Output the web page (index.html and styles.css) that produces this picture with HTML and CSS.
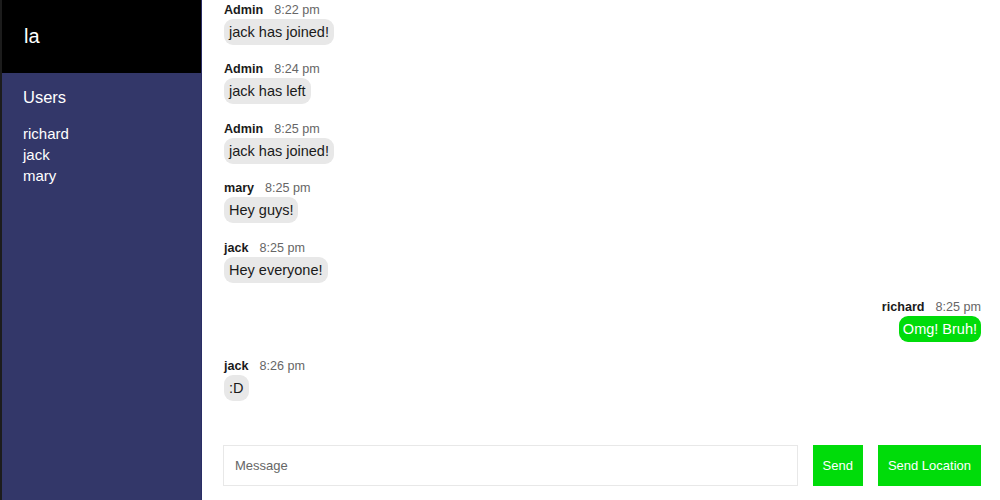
FILE: index.html
```html
<!DOCTYPE html>
<html>
<head>
<meta charset="utf-8">
<link rel="stylesheet" href="styles.css">
</head>
<body>
<div class="app">
  <aside class="sidebar">
    <div class="room">la</div>
    <div class="users">
      <h3 class="users-title">Users</h3>
      <ul class="user-list">
        <li>richard</li>
        <li>jack</li>
        <li>mary</li>
      </ul>
    </div>
  </aside>
  <main class="chat">
    <div class="messages">
      <div class="msg">
        <div class="meta"><span class="name">Admin</span><span class="time">8:22 pm</span></div>
        <div class="bubble">jack has joined!</div>
      </div>
      <div class="msg">
        <div class="meta"><span class="name">Admin</span><span class="time">8:24 pm</span></div>
        <div class="bubble">jack has left</div>
      </div>
      <div class="msg">
        <div class="meta"><span class="name">Admin</span><span class="time">8:25 pm</span></div>
        <div class="bubble">jack has joined!</div>
      </div>
      <div class="msg">
        <div class="meta"><span class="name">mary</span><span class="time">8:25 pm</span></div>
        <div class="bubble">Hey guys!</div>
      </div>
      <div class="msg">
        <div class="meta"><span class="name">jack</span><span class="time">8:25 pm</span></div>
        <div class="bubble">Hey everyone!</div>
      </div>
      <div class="msg mine">
        <div class="meta"><span class="name">richard</span><span class="time">8:25 pm</span></div>
        <div class="bubble">Omg! Bruh!</div>
      </div>
      <div class="msg">
        <div class="meta"><span class="name">jack</span><span class="time">8:26 pm</span></div>
        <div class="bubble">:D</div>
      </div>
    </div>
    <form class="compose">
      <input class="input" type="text" placeholder="Message">
      <button class="btn" type="button">Send</button>
      <button class="btn" type="button">Send Location</button>
    </form>
  </main>
</div>
</body>
</html>
```
FILE: styles.css
```css
* { box-sizing: border-box; }
html, body {
  margin: 0;
  padding: 0;
  height: 100%;
  background: #fff;
  font-family: "Liberation Sans", Arial, sans-serif;
  color: #111;
}
.app {
  display: flex;
  height: 500px;
  overflow: hidden;
}
.sidebar {
  width: 202px;
  flex: none;
  background: #333769;
  color: #fff;
  border-left: 2px solid #1c1c1c;
  border-right: 1px solid #2a2d66;
  display: flex;
  flex-direction: column;
}
.room {
  background: #000;
  height: 73px;
  padding: 0 22px;
  font-size: 20px;
  line-height: 73px;
}
.users {
  padding: 13px 21px;
}
.users-title {
  margin: 0 0 15px;
  font-size: 16.5px;
  font-weight: normal;
  line-height: 22px;
}
.user-list {
  list-style: none;
  margin: 0;
  padding: 0;
  font-size: 15px;
  line-height: 21px;
}
.chat {
  flex: 1;
  display: flex;
  flex-direction: column;
  min-width: 0;
}
.messages {
  flex: 1;
  padding: 2px 19px 0 22px;
  display: flex;
  flex-direction: column;
  overflow: hidden;
}
.msg {
  display: flex;
  flex-direction: column;
  align-items: flex-start;
  margin-bottom: 16.4px;
}
.msg.mine { align-items: flex-end; }
.meta {
  font-size: 12.6px;
  line-height: 16px;
  margin-bottom: 1px;
}
.name {
  font-weight: bold;
  color: #1a1a1a;
  margin-right: 11px;
}
.time { color: #666; }
.bubble {
  background: #e8e8e8;
  border-radius: 9px;
  padding: 4px 5px;
  font-size: 14.5px;
  line-height: 18px;
  color: #1a1a1a;
}
.mine .bubble {
  background: #00dc0a;
  color: #fff;
  padding: 4px 4px;
}
.compose {
  display: flex;
  gap: 15px;
  padding: 0 19px 14px 21px;
  margin: 0;
}
.input {
  flex: 1;
  height: 41px;
  border: 1px solid #e8e8e8;
  padding: 0 11px;
  font-family: "Liberation Sans", Arial, sans-serif;
  font-size: 13px;
  color: #333;
  outline: none;
}
.input::placeholder { color: #666; }
.btn {
  height: 41px;
  border: none;
  background: #00dc0a;
  color: #fff;
  font-family: "Liberation Sans", Arial, sans-serif;
  font-size: 13px;
  padding: 0 10px;
}
```
